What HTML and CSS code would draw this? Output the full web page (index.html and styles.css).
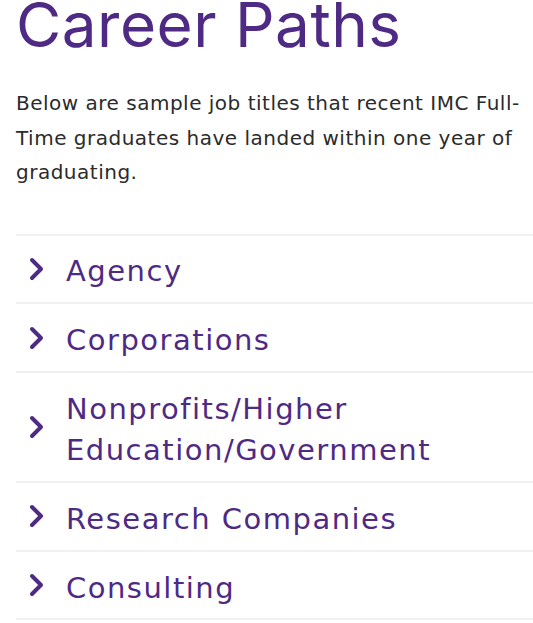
FILE: index.html
```html
<!DOCTYPE html>
<html lang="en">
<head>
<meta charset="utf-8">
<title>Career Paths</title>
<link rel="stylesheet" href="styles.css">
</head>
<body>
<main class="page">
  <h1 class="title">Career Paths</h1>
  <p class="intro">Below are sample job titles that recent IMC Full-Time graduates have landed within one year of graduating.</p>
  <ul class="accordion">
    <li class="item">
      <svg class="chev" viewBox="0 0 16 24" aria-hidden="true"><path d="M3 3 L12 12 L3 21" /></svg>
      <span class="label">Agency</span>
    </li>
    <li class="item">
      <svg class="chev" viewBox="0 0 16 24" aria-hidden="true"><path d="M3 3 L12 12 L3 21" /></svg>
      <span class="label">Corporations</span>
    </li>
    <li class="item">
      <svg class="chev" viewBox="0 0 16 24" aria-hidden="true"><path d="M3 3 L12 12 L3 21" /></svg>
      <span class="label">Nonprofits/Higher<br>Education/Government</span>
    </li>
    <li class="item">
      <svg class="chev" viewBox="0 0 16 24" aria-hidden="true"><path d="M3 3 L12 12 L3 21" /></svg>
      <span class="label">Research Companies</span>
    </li>
    <li class="item">
      <svg class="chev" viewBox="0 0 16 24" aria-hidden="true"><path d="M3 3 L12 12 L3 21" /></svg>
      <span class="label">Consulting</span>
    </li>
  </ul>
</main>
</body>
</html>
```
FILE: styles.css
```css
html, body {
  margin: 0;
  padding: 0;
  background: #ffffff;
}
.page {
  padding: 0 0 0 16px;
}
.title {
  margin: 0;
  font-family: "Inter", "Noto Sans", sans-serif;
  font-weight: 400;
  font-size: 62px;
  line-height: 50px;
  letter-spacing: 0.5px;
  color: #4e2a84;
}
.intro {
  margin: 36px 0 0 0;
  font-family: "DejaVu Sans", "Noto Sans", sans-serif;
  font-size: 20px;
  line-height: 34.5px;
  letter-spacing: 0.5px;
  color: #2b2b2b;
}
.accordion {
  list-style: none;
  margin: 44px 0 0 0;
  padding: 0;
  border-top: 2px solid #f0f0f0;
}
.item {
  display: flex;
  align-items: center;
  padding: 15.9px 0 9.9px;
  border-bottom: 2px solid #f0f0f0;
}
.chev {
  width: 16px;
  height: 24px;
  margin: 0 21px 6px 13px;
  flex: none;
}
.chev path {
  fill: none;
  stroke: #4e2a84;
  stroke-width: 4;
  stroke-linecap: round;
  stroke-linejoin: round;
}
.label {
  font-family: "DejaVu Sans", "Noto Sans", sans-serif;
  font-size: 29px;
  line-height: 41px;
  letter-spacing: 1.5px;
  color: #4e2a84;
}
```
